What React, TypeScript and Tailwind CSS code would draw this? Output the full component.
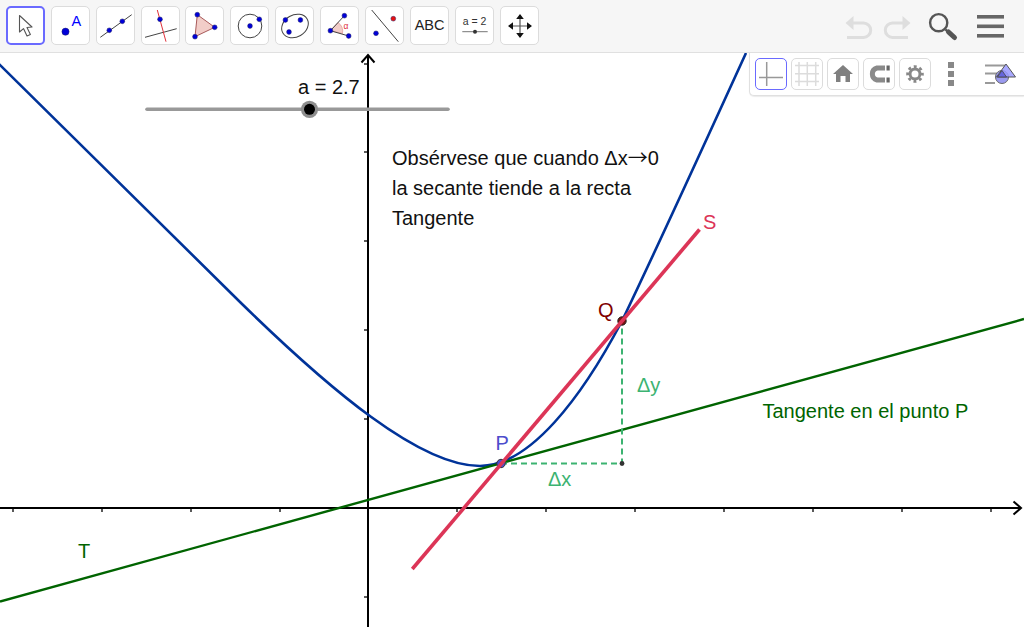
import React from "react";

const curvePath =
  "M-2 63 L240 302 C 330 390, 420 466, 480 466 C 530 466, 582 397, 622 321 C 655 252, 710 132, 746 53";

const xTicks = [13, 102, 191, 280, 457, 546, 635, 724, 813, 902, 991];
const yTicks = [64, 152, 241, 330, 419, 597];

function Dot({ cx, cy, r = 2.4, fill = "#0000d8" }: { cx: number; cy: number; r?: number; fill?: string }) {
  return <circle cx={cx} cy={cy} r={r} fill={fill} stroke="#222266" strokeWidth="0.5" />;
}

function Tool({ active, children }: { active?: boolean; children: React.ReactNode }) {
  return (
    <div
      className={
        active
          ? "w-[39px] h-[39px] shrink-0 rounded-[5px] bg-white border-2 border-[#6a6aff] flex items-center justify-center"
          : "w-[39px] h-[39px] shrink-0 rounded-[5px] bg-white border border-[#dcdcdc] flex items-center justify-center"
      }
    >
      {children}
    </div>
  );
}

function Ic({ children }: { children: React.ReactNode }) {
  return (
    <svg width="39" height="39" viewBox="0 0 39 39" className="shrink-0">
      {children}
    </svg>
  );
}

function StyleBtn({ active, children }: { active?: boolean; children: React.ReactNode }) {
  return (
    <div
      className={
        active
          ? "w-[32px] h-[32px] shrink-0 rounded-[5px] bg-white border border-[#6a6aff]"
          : "w-[32px] h-[32px] shrink-0 rounded-[5px] bg-white border border-[#dcdcdc]"
      }
    >
      <svg width="32" height="32" viewBox="0 0 32 32" className="block -m-px">
        {children}
      </svg>
    </div>
  );
}

export default function App() {
  return (
    <div className="w-[1024px] h-[627px] flex flex-col overflow-hidden bg-white font-['Liberation_Sans',Arial,sans-serif]">
      <header className="h-[53px] shrink-0 bg-[#f6f6f6] border-b border-[#e0e0e0] flex items-start justify-between pt-[6px] pl-[5.7px]">
        <div className="flex gap-[5.94px]">
          <Tool active>
            <svg width="35" height="35" viewBox="2 2 35 35" className="shrink-0">
              <path d="M13.5 9.5V26L17.5 22.6L21 30L24.4 28.5L21 21.5L26 21Z" fill="#fff" stroke="#555" strokeWidth="1.1" strokeLinejoin="round" />
            </svg>
          </Tool>
          <Tool>
            <Ic>
              <circle cx="14.5" cy="25.7" r="3.6" fill="#0000d8" stroke="#222266" strokeWidth="0.5" />
              <text x="20.5" y="19.5" fontSize="14.5" fill="#0000ff" fontFamily="'Liberation Sans',Arial,sans-serif">A</text>
            </Ic>
          </Tool>
          <Tool>
            <Ic>
              <line x1="4.3" y1="31.3" x2="35.7" y2="8.7" stroke="#444" strokeWidth="1" />
              <Dot cx={13.3} cy={24.3} />
              <Dot cx={26.3} cy={15.3} />
            </Ic>
          </Tool>
          <Tool>
            <Ic>
              <line x1="4" y1="31.3" x2="35.7" y2="22.7" stroke="#444" strokeWidth="1" />
              <line x1="16.3" y1="4" x2="25" y2="35.7" stroke="#e0303a" strokeWidth="1" />
              <Dot cx={19} cy={13.3} />
            </Ic>
          </Tool>
          <Tool>
            <Ic>
              <polygon points="12.3,8.7 29.7,21.3 10,30.7" fill="#f2cdc8" stroke="#a85a5a" strokeWidth="1" />
              <Dot cx={12.3} cy={8.7} />
              <Dot cx={29.7} cy={21.3} />
              <Dot cx={10} cy={30.7} />
            </Ic>
          </Tool>
          <Tool>
            <Ic>
              <circle cx="20" cy="20" r="11.8" fill="none" stroke="#444" strokeWidth="1" />
              <Dot cx={20} cy={20} />
              <Dot cx={29.3} cy={13.3} />
            </Ic>
          </Tool>
          <Tool>
            <Ic>
              <ellipse cx="20" cy="20" rx="14" ry="11" transform="rotate(-30 20 20)" fill="none" stroke="#444" strokeWidth="1" />
              <Dot cx={10.4} cy={14} />
              <Dot cx={25.4} cy={14} />
              <Dot cx={14} cy={26} />
            </Ic>
          </Tool>
          <Tool>
            <Ic>
              <path d="M10.4 24.7L18 16.5A11 11 0 0 1 22.5 27.5Z" fill="#f2cdc8" stroke="#d88" strokeWidth="0.6" />
              <line x1="10.4" y1="24.7" x2="24.4" y2="9.7" stroke="#444" strokeWidth="1" />
              <line x1="10.4" y1="24.7" x2="28.7" y2="30" stroke="#444" strokeWidth="1" />
              <text x="23.5" y="22.5" fontSize="8.5" fill="#e0303a" fontFamily="'Liberation Sans',Arial,sans-serif">α</text>
              <Dot cx={10.4} cy={24.7} />
              <Dot cx={24.4} cy={9.7} />
              <Dot cx={28.7} cy={30} />
            </Ic>
          </Tool>
          <Tool>
            <Ic>
              <line x1="6.7" y1="4" x2="33.3" y2="35.7" stroke="#444" strokeWidth="1" />
              <Dot cx={28.3} cy={12.7} fill="#e81010" />
              <Dot cx={11} cy={27.3} />
            </Ic>
          </Tool>
          <Tool>
            <span className="text-[14.5px] leading-none text-[#222]">ABC</span>
          </Tool>
          <Tool>
            <Ic>
              <text x="19.5" y="19" textAnchor="middle" fontSize="10.5" fill="#333" fontFamily="'Liberation Sans',Arial,sans-serif">a = 2</text>
              <line x1="7.3" y1="25.7" x2="32.7" y2="25.7" stroke="#777" strokeWidth="1" />
              <circle cx="20" cy="25.7" r="2" fill="#333" />
            </Ic>
          </Tool>
          <Tool>
            <Ic>
              <path d="M20 9V31M9 20H31" stroke="#555" strokeWidth="1.2" />
              <path d="M20 8L16.2 13H23.8ZM20 32L16.2 27H23.8ZM8 20L13 16.2V23.8ZM32 20L27 16.2V23.8Z" fill="#111" />
            </Ic>
          </Tool>
        </div>
        <div className="flex items-start pr-[9px]">
          <svg width="170" height="46" viewBox="845 0 170 46" className="-mt-[6px] shrink-0">
            <g fill="none" stroke="#dedede" strokeWidth="3">
              <path d="M851 23H863.5A7.2 7.2 0 0 1 863.5 37.4H847" />
              <path d="M905 23H892.5A7.2 7.2 0 0 0 892.5 37.4H908" />
            </g>
            <path d="M845.5 23L853.5 16V30Z" fill="#dedede" />
            <path d="M910.5 23L902.5 16V30Z" fill="#dedede" />
            <circle cx="938.7" cy="22.7" r="8.6" fill="none" stroke="#555" strokeWidth="2.4" />
            <path d="M945.5 29.5L948 32" stroke="#555" strokeWidth="2.4" />
            <path d="M948.5 32L954.5 37.5" stroke="#555" strokeWidth="5" strokeLinecap="round" />
            <rect x="977" y="15" width="27" height="3.6" fill="#666" />
            <rect x="977" y="24.5" width="27" height="3.6" fill="#666" />
            <rect x="977" y="34" width="27" height="3.6" fill="#666" />
          </svg>
        </div>
      </header>

      <main className="relative flex-1">
        <svg width="1024" height="574" viewBox="0 53 1024 574" className="absolute inset-0">
          {/* axes */}
          <g stroke="#000" fill="none">
            <line x1="0" y1="508" x2="1020" y2="508" strokeWidth="2" />
            <line x1="368" y1="627" x2="368" y2="55" strokeWidth="2" />
            <path d="M1013.5 501.5L1021 508L1013.5 514.5" strokeWidth="2" />
            <path d="M361.5 62.5L368 55L374.5 62.5" strokeWidth="2" />
            {xTicks.map((x) => (
              <line key={x} x1={x} y1="508" x2={x} y2="512" strokeWidth="1.3" />
            ))}
            {yTicks.map((y) => (
              <line key={y} x1="364" y1={y} x2="368" y2={y} strokeWidth="1.3" />
            ))}
          </g>

          {/* slider */}
          <line x1="147" y1="109.3" x2="448" y2="109.3" stroke="#999" strokeWidth="3.6" strokeLinecap="round" />
          <circle cx="309.5" cy="109.3" r="8.6" fill="#8e8e8e" />
          <circle cx="309.5" cy="109.3" r="5.5" fill="#000" />

          {/* function and lines */}
          <path d={curvePath} fill="none" stroke="#003399" strokeWidth="2.6" />
          <line x1="0" y1="601.5" x2="1024" y2="319" stroke="#006400" strokeWidth="2.4" />
          <path d="M501 463.5H622V321" fill="none" stroke="#3cb371" strokeWidth="2" strokeDasharray="6 4" />
          <circle cx="622" cy="463.5" r="2.4" fill="#333" />
          <circle cx="501" cy="463.5" r="4.2" fill="#4d4dcc" stroke="#333" strokeWidth="1" />
          <circle cx="622" cy="321" r="4.2" fill="#7a1010" stroke="#222" strokeWidth="1" />
          <line x1="412.3" y1="569" x2="699.5" y2="229.5" stroke="#dc3557" strokeWidth="3.6" />
        </svg>

        <div className="absolute left-[298px] top-[19px] text-[20px] leading-[30px] text-[#111] whitespace-nowrap">a = 2.7</div>
        <div className="absolute left-[392px] top-[90px] text-[20px] leading-[30px] text-[#111] whitespace-nowrap">
          <div>
            Obsérvese que cuando Δx<span className="font-['Noto_Sans_CJK_SC',sans-serif] leading-[20px]">→</span>0
          </div>
          <div>la secante tiende a la recta</div>
          <div>Tangente</div>
        </div>
        <div className="absolute left-[495.5px] top-[375px] text-[20px] leading-[30px] text-[#4d4dcc]">P</div>
        <div className="absolute left-[598px] top-[242px] text-[20px] leading-[30px] text-[#800000]">Q</div>
        <div className="absolute left-[703px] top-[154px] text-[20px] leading-[30px] text-[#dc3557]">S</div>
        <div className="absolute left-[78px] top-[483px] text-[20px] leading-[30px] text-[#006400]">T</div>
        <div className="absolute left-[548px] top-[411px] text-[20px] leading-[30px] text-[#3cb371]">Δx</div>
        <div className="absolute left-[637px] top-[317px] text-[20px] leading-[30px] text-[#3cb371]">Δy</div>
        <div className="absolute left-[762.5px] top-[343px] text-[20px] leading-[30px] text-[#006400] whitespace-nowrap">Tangente en el punto P</div>

        <div className="absolute right-0 top-0 w-[275px] h-[43px] bg-white border-l border-b border-[#e0e0e0] rounded-bl-[5px] shadow-[0_1px_1px_rgba(0,0,0,0.08)] flex items-start gap-[4px] pl-[5px] pt-[5px]">
          <StyleBtn active>
            <path d="M4 19.5H28M11.7 4V28" stroke="#999" strokeWidth="1.5" fill="none" />
          </StyleBtn>
          <StyleBtn>
            <path d="M8 4V28M16.3 4V28M24.7 4V28M4 7.5H28M4 15.7H28M4 23.5H28" stroke="#dcdcdc" strokeWidth="1.5" fill="none" />
          </StyleBtn>
          <StyleBtn>
            <path d="M16 7L26 16H23V24H18.5V18H13.5V24H9V16H6Z" fill="#808080" />
          </StyleBtn>
          <StyleBtn>
            <path d="M22 10H14A6.2 6.2 0 0 0 14 22H22" fill="none" stroke="#8a8a8a" strokeWidth="5" />
            <rect x="23.5" y="7.5" width="3.2" height="5" fill="#666" />
            <rect x="23.5" y="19.5" width="3.2" height="5" fill="#666" />
          </StyleBtn>
          <StyleBtn>
            <circle cx="16" cy="16" r="5" fill="none" stroke="#888" strokeWidth="3" />
            <circle cx="16" cy="16" r="7.4" fill="none" stroke="#888" strokeWidth="2.8" strokeDasharray="2.9 2.91" strokeDashoffset="1.45" />
          </StyleBtn>
          <div className="ml-[13px] mt-[4px] w-[6px] shrink-0 flex flex-col gap-[3px]">
            <div className="h-[6px] bg-[#888]" />
            <div className="h-[6px] bg-[#888]" />
            <div className="h-[6px] bg-[#888]" />
          </div>
          <svg width="34" height="32" viewBox="0 0 34 32" className="ml-[27px] shrink-0">
            <path d="M0 7.5H20M0 15.5H12M0 25H10" stroke="#999" strokeWidth="1.8" fill="none" />
            <circle cx="17" cy="19" r="6.5" fill="#9a9af0" stroke="#666" strokeWidth="1" />
            <path d="M21 6L30.5 19H11.5Z" fill="#9a9aff" fillOpacity="0.85" stroke="#555" strokeWidth="1" />
            <path d="M17 12.5L21.5 19H12.5Z" fill="#6666dd" stroke="#444" strokeWidth="0.8" />
          </svg>
        </div>
      </main>
    </div>
  );
}
